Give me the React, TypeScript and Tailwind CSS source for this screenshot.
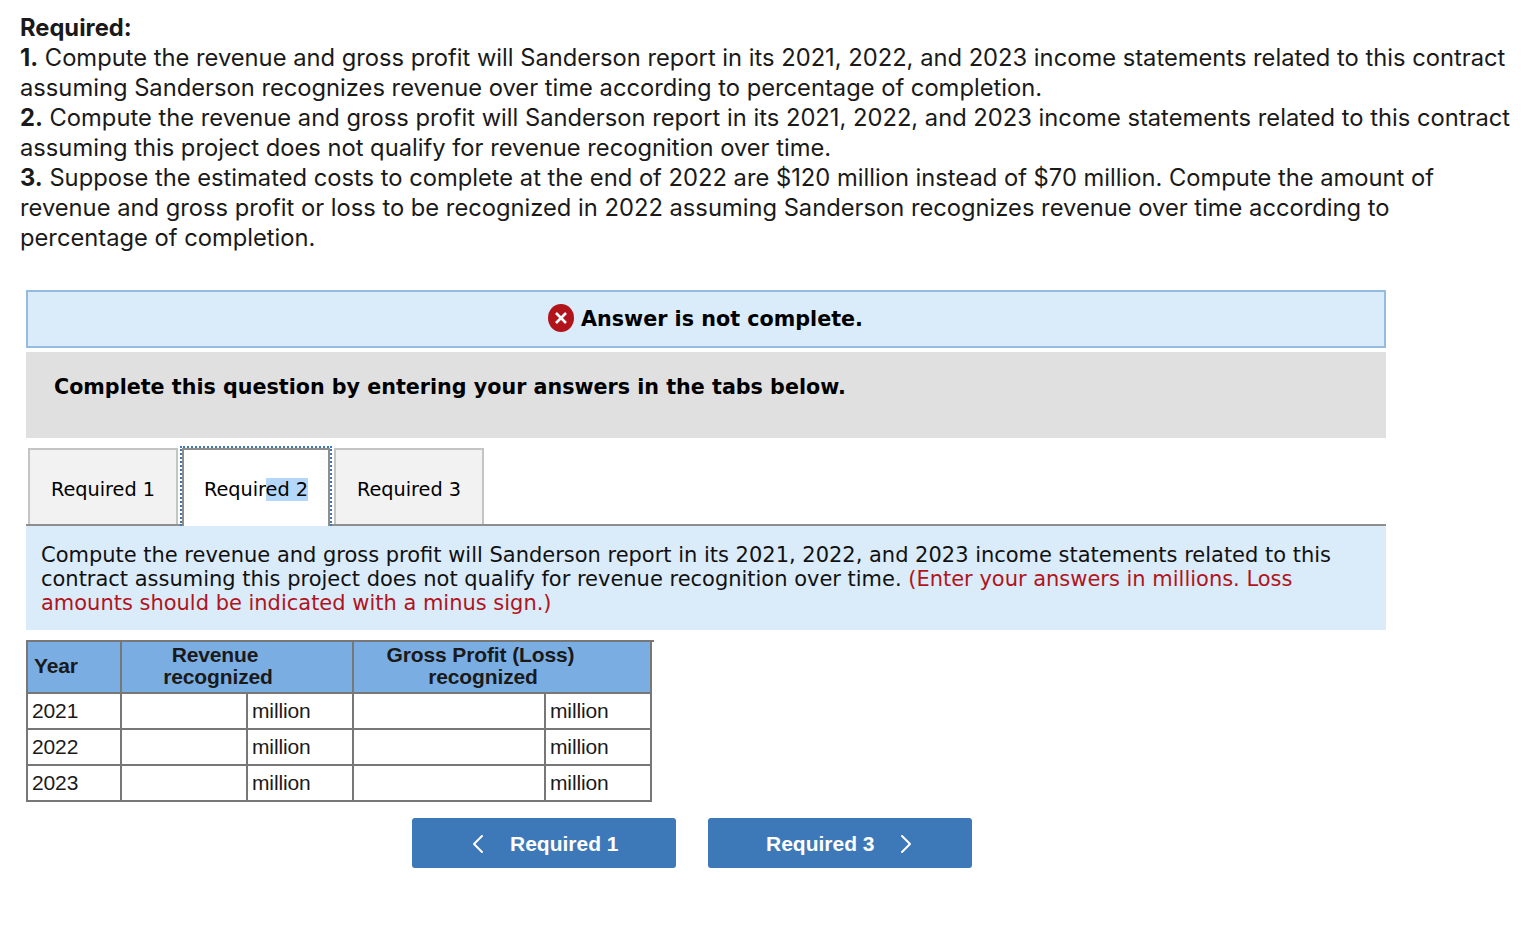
import { ChevronLeft, ChevronRight } from "lucide-react";

const years = ["2021", "2022", "2023"];

function Tab({ label, active }: { label: string; active?: boolean }) {
  if (active) {
    return (
      <div className="relative z-10 -mx-[1px] -mb-[2px] h-[80px] w-[152px] border-2 border-b-0 border-dotted border-[#3d78b8] bg-white">
        <div className="flex h-full items-center justify-center border-2 border-b-0 border-[#8e8e8e] pt-[4px] text-[19.3px]">
          <span>
            Requir<span className="bg-[#b4d7fb]">ed 2</span>
          </span>
        </div>
      </div>
    );
  }
  return (
    <div className="mt-[2px] flex h-[76px] w-[150px] items-center justify-center border-2 border-b-0 border-[#c4c4c4] bg-[#f2f2f2] pt-[6px] text-[19.3px]">
      {label}
    </div>
  );
}

export default function App() {
  return (
    <div className="min-h-[930px] bg-white text-black [font-family:'Liberation_Sans',sans-serif]">
      <div className="pl-5 pr-2 pt-[13px] text-[23.73px] leading-[30px] text-[#1a1a1a] [font-family:Inter,sans-serif]">
        <p className="font-bold">Required:</p>
        <p>
          <b>1.</b> Compute the revenue and gross profit will Sanderson report in its 2021, 2022, and 2023 income statements related to this contract
          <br />
          assuming Sanderson recognizes revenue over time according to percentage of completion.
        </p>
        <p>
          <b>2.</b> Compute the revenue and gross profit will Sanderson report in its 2021, 2022, and 2023 income statements related to this contract
          <br />
          assuming this project does not qualify for revenue recognition over time.
        </p>
        <p>
          <b>3.</b> Suppose the estimated costs to complete at the end of 2022 are $120 million instead of $70 million. Compute the amount of
          <br />
          revenue and gross profit or loss to be recognized in 2022 assuming Sanderson recognizes revenue over time according to
          <br />
          percentage of completion.
        </p>
      </div>

      <div className="ml-[26px] mt-[37px] w-[1360px] [font-family:'DejaVu_Sans',Verdana,sans-serif]">
        {/* 结果提示 */}
        <div className="flex h-[58px] items-center justify-center gap-[7px] border-2 border-[#94bbe0] bg-[#daebfa]">
          <svg viewBox="0 0 26 28" className="-ml-[1px] -mt-[2px] h-[28px] w-[26px]">
            <ellipse cx="13" cy="14" rx="13" ry="14" fill="#b1141b" />
            <path d="M8 9l10 10M18 9L8 19" stroke="#fff" strokeWidth="2.6" />
          </svg>
          <span className="pt-[2px] text-[20.7px] font-bold">Answer is not complete.</span>
        </div>

        <div className="mt-[4px] h-[86px] bg-[#e0e0e0] pl-[28px] pt-[20px] text-[20.66px] font-bold leading-[30px]">
          Complete this question by entering your answers in the tabs below.
        </div>

        {/* 标签页 */}
        <div className="mt-[8px] flex items-start gap-[3px] border-b-2 border-[#8e8e8e] pl-[2px]">
          <Tab label="Required 1" />
          <Tab label="Required 2" active />
          <Tab label="Required 3" />
        </div>

        <div className="h-[104px] bg-[#daebfa] px-[15px] pt-[17px] text-[20.98px] leading-[24px] text-[#111]">
          Compute the revenue and gross profit will Sanderson report in its 2021, 2022, and 2023 income statements related to this
          <br />
          contract assuming this project does not qualify for revenue recognition over time.{" "}
          <span className="text-[#b1141b]">
            (Enter your answers in millions. Loss
            <br />
            amounts should be indicated with a minus sign.)
          </span>
        </div>

        {/* 表格 */}
        <div className="mt-[10px] w-[628px] border-t-2 border-[#777]">
          <table className="w-[626px] table-fixed border-collapse text-[21px] leading-[22px] tracking-[-0.12px] text-[#1a1a1a] [font-family:'Liberation_Sans',sans-serif]">
            <colgroup>
              <col className="w-[94px]" />
              <col className="w-[126px]" />
              <col className="w-[106px]" />
              <col className="w-[192px]" />
              <col className="w-[106px]" />
            </colgroup>
            <thead>
              <tr className="h-[51px] bg-[#7aaee3] font-bold">
                <th className="border-2 border-t-0 border-[#777] pb-[3px] pl-[6px] text-left">Year</th>
                <th colSpan={2} className="border-2 border-t-0 border-[#777] pb-[3px] pr-[38px]">
                  <span className="pr-[6px]">Revenue</span>
                  <br />
                  recognized
                </th>
                <th colSpan={2} className="border-2 border-t-0 border-[#777] pb-[3px] pr-[38px]">
                  <span className="pr-[5px]">Gross Profit (Loss)</span>
                  <br />
                  recognized
                </th>
              </tr>
            </thead>
            <tbody>
              {years.map((year) => (
                <tr key={year} className="h-[36px]">
                  <td className="border-2 border-[#777] pl-[4px]">{year}</td>
                  <td className="border-2 border-[#777]" />
                  <td className="border-2 border-[#777] pl-[4px]">million</td>
                  <td className="border-2 border-[#777]" />
                  <td className="border-2 border-[#777] pl-[4px]">million</td>
                </tr>
              ))}
            </tbody>
          </table>
        </div>

        <div className="ml-[386px] mt-[16px] flex gap-[32px] text-[21px] font-bold text-white [font-family:'Liberation_Sans',sans-serif]">
          <button className="flex h-[50px] w-[264px] items-center gap-[16px] rounded-[3px] bg-[#3d78b8] pl-[50px] pt-[2px]">
            <ChevronLeft className="h-[32px] w-[32px]" strokeWidth={1.5} />
            Required 1
          </button>
          <button className="flex h-[50px] w-[264px] items-center gap-[15px] rounded-[3px] bg-[#3d78b8] pl-[58px] pt-[2px]">
            Required 3
            <ChevronRight className="h-[32px] w-[32px]" strokeWidth={1.5} />
          </button>
        </div>
      </div>
    </div>
  );
}
